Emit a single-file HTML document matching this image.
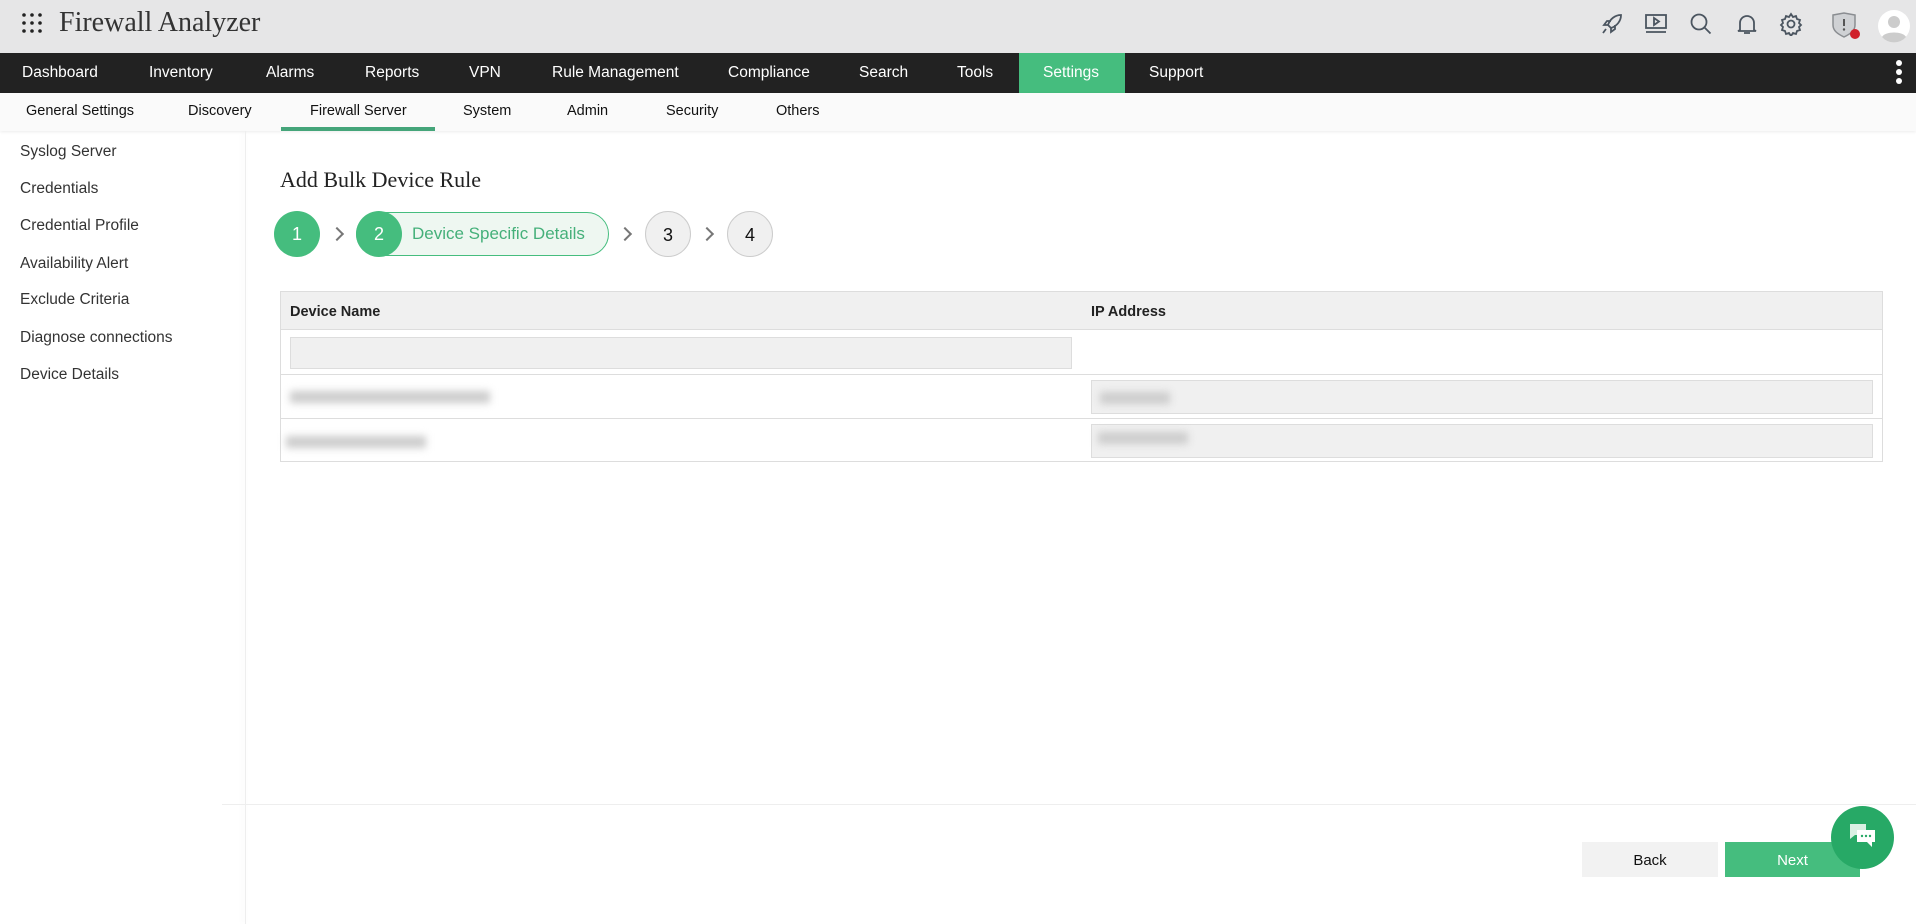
<!DOCTYPE html>
<html><head><meta charset="utf-8"><style>
*{margin:0;padding:0;box-sizing:border-box}
body{width:1916px;height:924px;overflow:hidden;background:#fff;font-family:"Liberation Sans",sans-serif;position:relative;color:#222}
.a{position:absolute;white-space:nowrap}
#hdr{position:absolute;left:0;top:0;width:1916px;height:53px;background:#e6e6e7}
#nav{position:absolute;left:0;top:53px;width:1916px;height:40px;background:#222}
#nav .a{color:#fff;font-size:15.5px;top:11px}
#sub{position:absolute;left:0;top:93px;width:1916px;height:38px;background:#fafafa;box-shadow:0 1px 3px rgba(0,0,0,.08)}
#sub .a{font-size:14.5px;top:10px;color:#111}
.side{font-size:15.5px;color:#333;left:20px}
.circ{position:absolute;border-radius:50%;width:46px;height:46px;text-align:center;line-height:46px;font-size:18px}
.chev{position:absolute;top:229px;width:10px;height:10px;border-right:2px solid #777;border-top:2px solid #777;transform:rotate(45deg)}
.blur{position:absolute;background:#ccc;filter:blur(4px);height:12px}
</style></head><body>
<div id="hdr">
 <svg class="a" style="left:22px;top:13px" width="22" height="22"><g fill="#222"><circle cx="2" cy="2" r="1.8"/><circle cx="10" cy="2" r="1.8"/><circle cx="18" cy="2" r="1.8"/><circle cx="2" cy="10" r="1.8"/><circle cx="10" cy="10" r="1.8"/><circle cx="18" cy="10" r="1.8"/><circle cx="2" cy="18" r="1.8"/><circle cx="10" cy="18" r="1.8"/><circle cx="18" cy="18" r="1.8"/></g></svg>
 <div class="a" style="left:59px;top:7px;font-family:'Liberation Serif',serif;font-size:28px;color:#333">Firewall Analyzer</div>
 <svg class="a" style="left:1600px;top:12px" width="24" height="24" fill="none" stroke="#4b5560" stroke-width="1.8"><path d="M21 3c-6 0-11 4-13 10l3 3c6-2 10-7 10-13z M8 13l-4 0 3-4 4 0 M11 16l0 4 4-3 0-4 M6 17l-3 4"/></svg>
 <svg class="a" style="left:1644px;top:13px" width="24" height="22" fill="none" stroke="#4b5560" stroke-width="1.8"><rect x="2" y="2" width="20" height="13"/><path d="M10 5l5 3.5-5 3.5z M2 19h20"/></svg>
 <svg class="a" style="left:1689px;top:12px" width="24" height="24" fill="none" stroke="#4b5560" stroke-width="1.8"><circle cx="10" cy="10" r="7.5"/><path d="M15.5 15.5l6 6"/></svg>
 <svg class="a" style="left:1736px;top:12px" width="22" height="24" fill="none" stroke="#4b5560" stroke-width="1.8"><path d="M4 18V11a7 7 0 0114 0v7l2 1H2z M8 21h6"/></svg>
 <svg class="a" style="left:1779px;top:12px" width="24" height="24" fill="none" stroke="#4b5560" stroke-width="1.8"><circle cx="12" cy="12" r="3.5"/><path d="M12 2l2 3 3-1 1 3 3 1-1 3 2 2-2 2 1 3-3 1-1 3-3-1-2 3-2-3-3 1-1-3-3-1 1-3-2-2 2-2-1-3 3-1 1-3 3 1z"/></svg>
 <svg class="a" style="left:1831px;top:12px" width="32" height="28"><path d="M2 3l11-2 11 2v10c0 6-5 9-11 12C7 22 2 19 2 13z" fill="#cfd1d4" stroke="#8a8d91" stroke-width="1.5"/><path d="M13 7v7" stroke="#555" stroke-width="2"/><circle cx="13" cy="17.5" r="1.2" fill="#555"/><circle cx="24" cy="22" r="5" fill="#d0202a"/></svg>
 <svg class="a" style="left:1877px;top:9px" width="34" height="34"><circle cx="17" cy="17" r="16" fill="#fff"/><circle cx="17" cy="13" r="6" fill="#ccc"/><path d="M5 28c3-6 21-6 24 0a16 16 0 01-24 0z" fill="#ccc"/></svg>
</div>
<div id="nav">
 <div class="a" style="left:22px">Dashboard</div>
 <div class="a" style="left:149px">Inventory</div>
 <div class="a" style="left:266px">Alarms</div>
 <div class="a" style="left:365px">Reports</div>
 <div class="a" style="left:469px">VPN</div>
 <div class="a" style="left:552px">Rule Management</div>
 <div class="a" style="left:728px">Compliance</div>
 <div class="a" style="left:859px">Search</div>
 <div class="a" style="left:957px">Tools</div>
 <div class="a" style="left:1019px;top:0;width:106px;height:40px;background:#45bd7e"></div>
 <div class="a" style="left:1043px">Settings</div>
 <div class="a" style="left:1149px">Support</div>
 <svg class="a" style="left:1895px;top:6px" width="8" height="28" fill="#fff"><circle cx="4" cy="4" r="3"/><circle cx="4" cy="13" r="3"/><circle cx="4" cy="22" r="3"/></svg>
</div>
<div id="sub">
 <div class="a" style="left:26px">General Settings</div>
 <div class="a" style="left:188px">Discovery</div>
 <div class="a" style="left:310px">Firewall Server</div>
 <div class="a" style="left:463px">System</div>
 <div class="a" style="left:567px">Admin</div>
 <div class="a" style="left:666px">Security</div>
 <div class="a" style="left:776px">Others</div>
 <div class="a" style="left:281px;top:34px;width:154px;height:4px;background:#45a57a"></div>
</div>
<div class="a" style="left:245px;top:131px;width:1px;height:793px;box-shadow:-2px 0 6px rgba(0,0,0,.08);background:#eee"></div>
<div class="a side" style="top:143px">Syslog Server</div>
<div class="a side" style="top:180px">Credentials</div>
<div class="a side" style="top:217px">Credential Profile</div>
<div class="a side" style="top:255px">Availability Alert</div>
<div class="a side" style="top:291px">Exclude Criteria</div>
<div class="a side" style="top:329px">Diagnose connections</div>
<div class="a side" style="top:366px">Device Details</div>

<div class="a" style="left:280px;top:167px;font-family:'Liberation Serif',serif;font-size:22px;color:#222">Add Bulk Device Rule</div>
<div class="circ" style="left:274px;top:211px;background:#45bd7e;color:#fff">1</div>
<div class="chev" style="left:332px"></div>
<div class="a" style="left:356px;top:212px;width:253px;height:44px;border:1px solid #45bd7e;border-radius:22px;background:#eef7f1"></div>
<div class="circ" style="left:356px;top:211px;background:#45bd7e;color:#fff">2</div>
<div class="a" style="left:412px;top:224px;font-size:17px;color:#45b07a">Device Specific Details</div>
<div class="chev" style="left:620px"></div>
<div class="circ" style="left:645px;top:211px;background:#f0f0f0;border:1px solid #ccc;color:#111">3</div>
<div class="chev" style="left:702px"></div>
<div class="circ" style="left:727px;top:211px;background:#f0f0f0;border:1px solid #ccc;color:#111">4</div>

<div class="a" style="left:280px;top:291px;width:1603px;height:171px;border:1px solid #ddd"></div>
<div class="a" style="left:281px;top:292px;width:1601px;height:38px;background:#f0f0f0;border-bottom:1px solid #ddd"></div>
<div class="a" style="left:290px;top:304px;font-size:14.5px;font-weight:bold;color:#222">Device Name</div>
<div class="a" style="left:1091px;top:304px;font-size:14.5px;font-weight:bold;color:#222">IP Address</div>
<div class="a" style="left:290px;top:337px;width:782px;height:32px;background:#f0f0f0;border:1px solid #ddd"></div>
<div class="a" style="left:281px;top:374px;width:1601px;height:1px;background:#ddd"></div>
<div class="a" style="left:281px;top:418px;width:1601px;height:1px;background:#ddd"></div>
<div class="a" style="left:1091px;top:380px;width:782px;height:34px;background:#f0f0f0;border:1px solid #ddd"></div>
<div class="a" style="left:1091px;top:424px;width:782px;height:34px;background:#f0f0f0;border:1px solid #ddd"></div>
<div class="blur" style="left:290px;top:391px;width:200px"></div>
<div class="blur" style="left:286px;top:436px;width:140px"></div>
<div class="blur" style="left:1100px;top:392px;width:70px"></div>
<div class="blur" style="left:1098px;top:432px;width:90px"></div>

<div class="a" style="left:222px;top:804px;width:1694px;height:1px;background:#eee"></div>
<div class="a" style="left:1582px;top:842px;width:136px;height:35px;background:#f2f2f2;text-align:center;line-height:37px;font-size:15px;color:#111">Back</div>
<div class="a" style="left:1725px;top:842px;width:135px;height:35px;background:#45bd7e;text-align:center;line-height:37px;font-size:15px;color:#fff">Next</div>
<div class="a" style="left:1831px;top:806px;width:63px;height:63px;border-radius:50%;background:#27a966"></div>
<svg class="a" style="left:1848px;top:822px" width="30" height="30"><path d="M2 2h16v11H7l-5 4z" fill="#d9f0e3"/><path d="M9 8h18v12h-3v5l-5-5H9z" fill="#fff"/><g fill="#27a966"><circle cx="14" cy="14" r="1.2"/><circle cx="18" cy="14" r="1.2"/><circle cx="22" cy="14" r="1.2"/></g></svg>
</body></html>
